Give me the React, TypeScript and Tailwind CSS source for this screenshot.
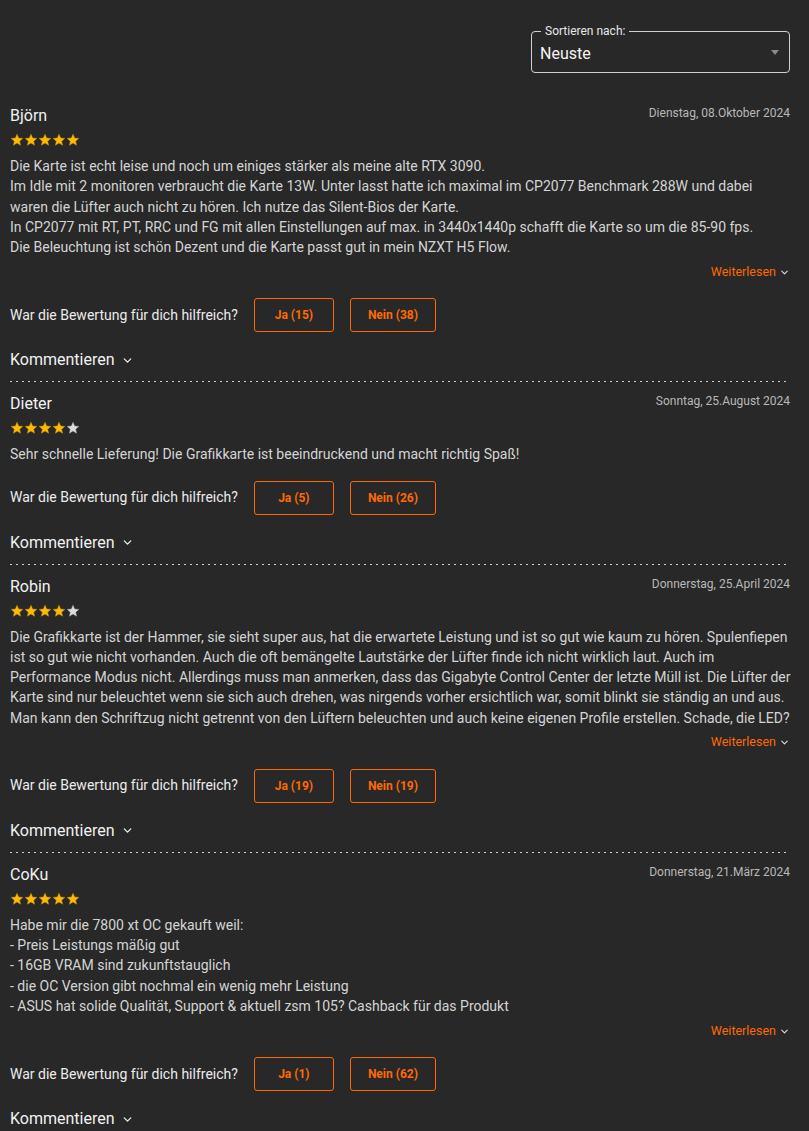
import React from "react";

type Review = {
  name: string;
  date: string;
  stars: number;
  lines: string[];
  more: boolean;
  ja: number;
  nein: number;
};

const reviews: Review[] = [
  {
    name: "Björn",
    date: "Dienstag, 08.Oktober 2024",
    stars: 5,
    lines: [
      "Die Karte ist echt leise und noch um einiges stärker als meine alte RTX 3090.",
      "Im Idle mit 2 monitoren verbraucht die Karte 13W. Unter lasst hatte ich maximal im CP2077 Benchmark 288W und dabei",
      "waren die Lüfter auch nicht zu hören. Ich nutze das Silent-Bios der Karte.",
      "In CP2077 mit RT, PT, RRC und FG mit allen Einstellungen auf max. in 3440x1440p schafft die Karte so um die 85-90 fps.",
      "Die Beleuchtung ist schön Dezent und die Karte passt gut in mein NZXT H5 Flow.",
    ],
    more: true,
    ja: 15,
    nein: 38,
  },
  {
    name: "Dieter",
    date: "Sonntag, 25.August 2024",
    stars: 4,
    lines: ["Sehr schnelle Lieferung! Die Grafikkarte ist beeindruckend und macht richtig Spaß!"],
    more: false,
    ja: 5,
    nein: 26,
  },
  {
    name: "Robin",
    date: "Donnerstag, 25.April 2024",
    stars: 4,
    lines: [
      "Die Grafikkarte ist der Hammer, sie sieht super aus, hat die erwartete Leistung und ist so gut wie kaum zu hören. Spulenfiepen",
      "ist so gut wie nicht vorhanden. Auch die oft bemängelte Lautstärke der Lüfter finde ich nicht wirklich laut. Auch im",
      "Performance Modus nicht. Allerdings muss man anmerken, dass das Gigabyte Control Center der letzte Müll ist. Die Lüfter der",
      "Karte sind nur beleuchtet wenn sie sich auch drehen, was nirgends vorher ersichtlich war, somit blinkt sie ständig an und aus.",
      "Man kann den Schriftzug nicht getrennt von den Lüftern beleuchten und auch keine eigenen Profile erstellen. Schade, die LED?",
    ],
    more: true,
    ja: 19,
    nein: 19,
  },
  {
    name: "CoKu",
    date: "Donnerstag, 21.März 2024",
    stars: 5,
    lines: [
      "Habe mir die 7800 xt OC gekauft weil:",
      "- Preis Leistungs mäßig gut",
      "- 16GB VRAM sind zukunftstauglich",
      "- die OC Version gibt nochmal ein wenig mehr Leistung",
      "- ASUS hat solide Qualität, Support & aktuell zsm 105? Cashback für das Produkt",
    ],
    more: true,
    ja: 1,
    nein: 62,
  },
];

const STAR = "M12 17.27L18.18 21l-1.64-7.03L22 9.24l-7.19-.61L12 2 9.19 8.63 2 9.24l5.46 4.73L5.82 21z";

function Stars({ n }: { n: number }) {
  return (
    <div className="flex h-[14px]">
      {[0, 1, 2, 3, 4].map((i) => (
        <svg key={i} width="14" height="14" viewBox="0 0 24 24">
          <path
            d={STAR}
            fill={i < n ? "#fdba05" : "#dcdcdc"}
            stroke={i < n ? "#d99600" : "#a8a8a8"}
            strokeWidth="0.8"
          />
        </svg>
      ))}
    </div>
  );
}

function Chevron({ className, color }: { className?: string; color: string }) {
  return (
    <svg className={className} viewBox="0 0 24 24" fill="none">
      <path d="M6 9l6 6 6-6" stroke={color} strokeWidth="2.4" strokeLinecap="round" strokeLinejoin="round" />
    </svg>
  );
}

function ReviewBlock({ r, last }: { r: Review; last: boolean }) {
  return (
    <div className="pt-[11px]">
      <div className="flex items-start justify-between">
        <div className="text-[16px] leading-[22px] text-[#f2f2f2]">{r.name}</div>
        <div className="text-[12px] leading-[16px] text-[#b8b8b8]">{r.date}</div>
      </div>
      <div className="mt-[6px]">
        <Stars n={r.stars} />
      </div>
      <div className="mt-[9px] text-[14px] leading-[20.25px] text-[#d4d4d4]">
        {r.lines.map((l, i) => (
          <div key={i} className="whitespace-nowrap">
            {l}
          </div>
        ))}
      </div>
      {r.more && (
        <div className="mt-[5px] flex h-5 items-center justify-end">
          <span className="text-[12.5px] text-[#ff6a00]">Weiterlesen</span>
          <Chevron className="ml-[3px] h-[11px] w-[11px]" color="#dddddd" />
        </div>
      )}
      <div className="mt-4 flex items-center">
        <span className="text-[14px] text-[#ececec]">War die Bewertung für dich hilfreich?</span>
        <button className="ml-4 h-[34px] min-w-[80px] rounded-[3px] border border-[#ff6a00] px-[17px] text-[12px] font-bold text-[#ff6a00]">
          Ja ({r.ja})
        </button>
        <button className="ml-[16px] h-[34px] min-w-[80px] rounded-[3px] border border-[#ff6a00] px-[17px] text-[12px] font-bold text-[#ff6a00]">
          Nein ({r.nein})
        </button>
      </div>
      <div className="mt-[17px] flex h-[22px] items-center">
        <span className="text-[16px] text-[#f2f2f2]">Kommentieren</span>
        <Chevron className="ml-[6px] h-[13px] w-[13px]" color="#eeeeee" />
      </div>
      {!last && (
        <div className="mt-[10px] h-px bg-[repeating-linear-gradient(to_right,#cfcfcf_0px,#cfcfcf_2px,transparent_2px,transparent_6px)]" />
      )}
    </div>
  );
}

export default function App() {
  return (
    <div className="min-h-[1131px] bg-[#282828] pl-[10px] pr-[19px] pt-[31px] font-['Roboto',sans-serif]">
      <div className="flex justify-end">
        <div className="relative flex h-[42px] w-[259px] items-center justify-between rounded-[4px] border border-[#d0d0d0] pl-[8px] pr-[10px] pt-[3px]">
          <span className="absolute -top-[9px] left-[9px] bg-[#282828] px-[4px] text-[12px] leading-4 text-[#e6e6e6]">
            Sortieren nach:
          </span>
          <span className="text-[16px] text-[#f4f4f4]">Neuste</span>
          <svg width="8" height="5" viewBox="0 0 8 5" className="-mt-[3px]">
            <path d="M0 0h8L4 5z" fill="#8a8a8a" />
          </svg>
        </div>
      </div>
      <div className="mt-[21px]">
        {reviews.map((r, i) => (
          <ReviewBlock key={i} r={r} last={i === reviews.length - 1} />
        ))}
      </div>
    </div>
  );
}
